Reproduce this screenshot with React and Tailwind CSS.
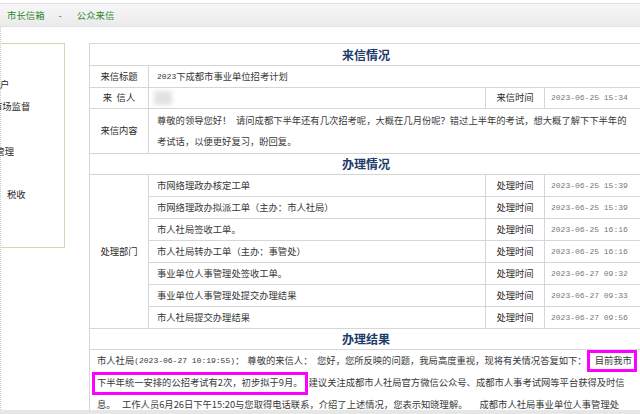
import React from "react";

const procRows = [
  ["市网络理政办核定工单", "2023-06-25 15:39"],
  ["市网络理政办拟派工单（主办：市人社局）", "2023-06-25 15:39"],
  ["市人社局签收工单。", "2023-06-25 16:16"],
  ["市人社局转办工单（主办：事管处）", "2023-06-25 16:16"],
  ["事业单位人事管理处签收工单。", "2023-06-27 09:32"],
  ["事业单位人事管理处提交办理结果", "2023-06-27 09:33"],
  ["市人社局提交办理结果", "2023-06-27 09:56"],
];

function TitleRow({ text, h }) {
  return (
    <div
      className={`flex ${h} items-center justify-center border-b border-[#d6d6d6] text-[12px] font-bold text-[#1d3b6b]`}
    >
      {text}
    </div>
  );
}

function TimeCells({ label, value }) {
  return (
    <>
      <div className="flex w-[59px] shrink-0 items-center justify-center border-r border-[#d6d6d6] text-[#2a2a2a]">
        {label}
      </div>
      <div className="flex flex-1 items-center pl-[6px] font-['Liberation_Mono',monospace] text-[8px] text-[#7a7a7a]">
        {value}
      </div>
    </>
  );
}

export default function App() {
  return (
    <div className="relative h-[414px] w-[640px] overflow-hidden bg-white font-['Noto_Sans_CJK_SC',sans-serif] text-[9.3px] text-[#383838]">
      {/* top bar */}
      <div className="h-[3px] bg-white" />
      <div className="flex h-[24px] items-center border-y border-[#e2e2e2] bg-gradient-to-b from-[#f7f7f7] to-[#ebebeb] pl-[7px] text-[9.4px] text-[#2f872f]">
        <span>市长信箱</span>
        <span className="ml-[14px]">-</span>
        <span className="ml-[15px]">公众来信</span>
      </div>

      {/* body */}
      <div className="flex items-start border-l border-dotted border-[#c8c8c8] pt-[16px]">
        {/* sidebar, cut off at the left edge */}
        <div className="-ml-px h-[205px] w-[65px] shrink-0 overflow-hidden border border-l-0 border-[#d8d5b2] text-[#2a2a2a]">
          <div className="mt-[29px] h-[22px] leading-[22px] -ml-[9.3px] whitespace-nowrap">账户</div>
          <div className="h-[22px] leading-[22px] -ml-[7px] whitespace-nowrap">市场监督</div>
          <div className="mt-[23px] h-[22px] leading-[22px] -ml-[4.5px] whitespace-nowrap">管理</div>
          <div className="mt-[21px] h-[22px] leading-[22px] ml-[7px] whitespace-nowrap">税收</div>
        </div>

        {/* main table */}
        <div className="ml-[24px] w-[553px] shrink-0 border-l border-t border-[#d6d6d6]">
          <TitleRow text="来信情况" h="h-[22px]" />

          <div className="flex h-[22px] border-b border-[#d6d6d6]">
            <div className="flex w-[59px] shrink-0 items-center justify-center border-r border-[#d6d6d6] text-[#2a2a2a]">
              来信标题
            </div>
            <div className="flex flex-1 items-center pl-[8px]">
              <span className="font-['Liberation_Mono',monospace] text-[8px]">2023</span>
              下成都市事业单位招考计划
            </div>
          </div>

          <div className="flex h-[21px] border-b border-[#d6d6d6]">
            <div className="flex w-[59px] shrink-0 items-center justify-center border-r border-[#d6d6d6] text-[#2a2a2a]">
              来<span className="ml-[4.5px]">信人</span>
            </div>
            <div className="flex w-[337px] shrink-0 items-center border-r border-[#d6d6d6] pl-[5px]">
              <div className="h-[14px] w-[18px] bg-[#e2e2e2] blur-[2px]" />
            </div>
            <TimeCells label="来信时间" value="2023-06-25 15:34" />
          </div>

          <div className="flex h-[45px] border-b border-[#d6d6d6]">
            <div className="flex w-[59px] shrink-0 items-center justify-center border-r border-[#d6d6d6] text-[#2a2a2a]">
              来信内容
            </div>
            <div className="flex flex-1 flex-col justify-center whitespace-nowrap pl-[8px]">
              <div className="h-[21px] leading-[21px]">
                尊敬的领导您好！
                <span className="ml-[4.6px]">
                  请问成都下半年还有几次招考呢，大概在几月份呢？错过上半年的考试，想大概了解下下半年的
                </span>
              </div>
              <div className="h-[21px] leading-[21px]">考试话，以便更好复习，盼回复。</div>
            </div>
          </div>

          <TitleRow text="办理情况" h="h-[21px]" />

          <div className="flex border-b border-[#d6d6d6]">
            <div className="flex w-[59px] shrink-0 items-center justify-center border-r border-[#d6d6d6] text-[#2a2a2a]">
              处理部门
            </div>
            <div className="flex-1">
              {procRows.map(([text, time], i) => (
                <div
                  key={i}
                  className={`flex ${i === procRows.length - 1 ? "h-[21px]" : "h-[22px] border-b border-[#d6d6d6]"}`}
                >
                  <div className="flex w-[337px] shrink-0 items-center whitespace-nowrap border-r border-[#d6d6d6] pl-[8px]">
                    {text}
                  </div>
                  <TimeCells label="处理时间" value={time} />
                </div>
              ))}
            </div>
          </div>

          <TitleRow text="办理结果" h="h-[21px]" />

          <div className="whitespace-nowrap">
            <div className="flex h-[22px] items-center pl-[7px]">
              <span>市人社局</span>
              <span className="font-['Liberation_Mono',monospace] text-[8px]">(2023-06-27 10:19:55)</span>
              <span>：</span>
              <span className="ml-[3px]">尊敬的来信人：</span>
              <span className="ml-[4.6px]">
                您好，您所反映的问题，我局高度重视，现将有关情况答复如下：
              </span>
              <span className="flex h-[22px] items-center border-[3px] border-[#ff00ff] pl-[5px] pr-[2px]">
                目前我市
              </span>
            </div>
            <div className="flex h-[22px] items-center pl-[2px]">
              <span className="flex h-[23px] items-center border-[3px] border-[#ff00ff] pl-[2px] pr-[2px]">
                下半年统一安排的公招考试有2次，初步拟于9月。
              </span>
              <span className="ml-[1px]">
                建议关注成都市人社局官方微信公众号、成都市人事考试网等平台获得及时信
              </span>
            </div>
            <div className="flex h-[22px] items-center pl-[7px]">
              <span>息。</span>
              <span className="ml-[6.4px]">
                工作人员6月26日下午15:20与您取得电话联系，介绍了上述情况，您表示知晓理解。
              </span>
              <span className="ml-[12px]">成都市人社局事业单位人事管理处</span>
            </div>
          </div>
        </div>
      </div>

      {/* bottom strip */}
      <div className="absolute bottom-0 left-0 h-[4px] w-full bg-[#e6e6e6]" />
    </div>
  );
}
